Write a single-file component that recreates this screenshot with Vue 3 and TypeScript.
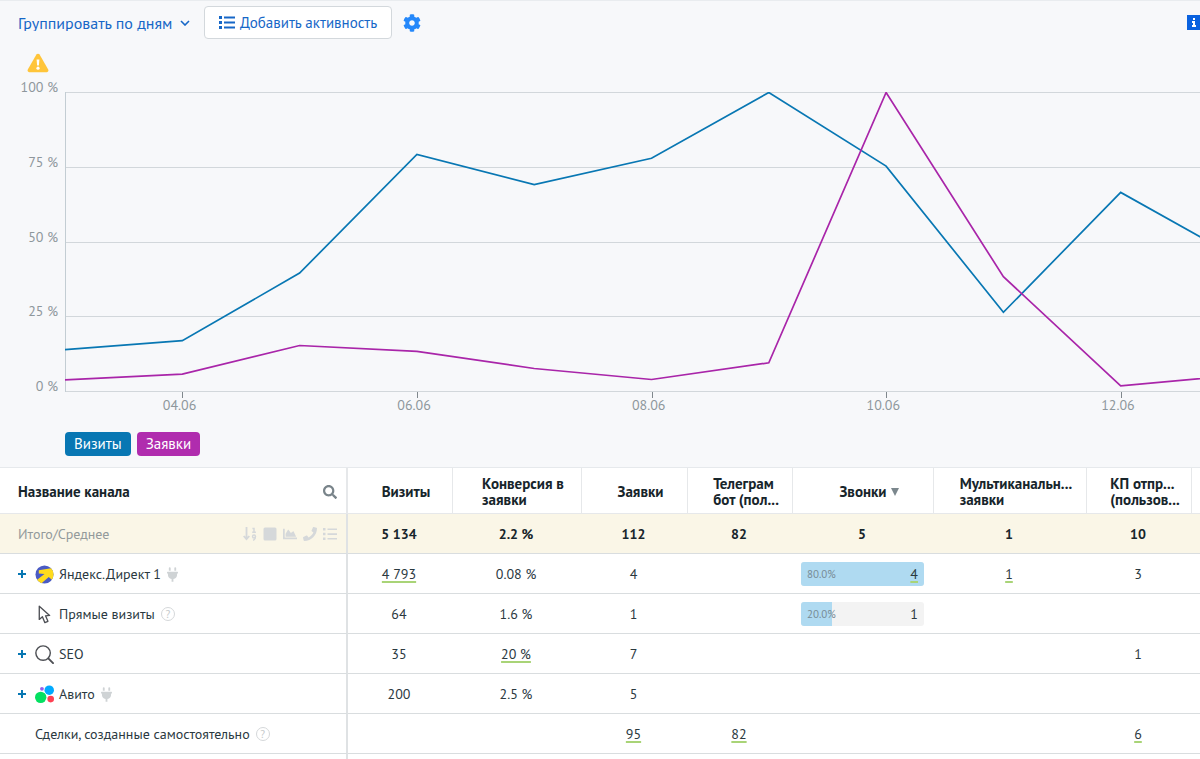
<script setup lang="ts">
import { ref } from 'vue'

interface Column {
  key: string
  title: string
  sorted?: boolean
}

interface Cell {
  text: string
  link?: boolean
  share?: string
  fill?: number
}

interface Channel {
  name: string
  icon?: 'direct' | 'cursor' | 'search' | 'avito'
  expandable?: boolean
  plug?: boolean
  help?: boolean
  cells: Record<string, Cell>
}

const grouping = ref('day')

const columns: Column[] = [
  { key: 'visits', title: 'Визиты' },
  { key: 'conversion', title: 'Конверсия в\nзаявки' },
  { key: 'leads', title: 'Заявки' },
  { key: 'telegram', title: 'Телеграм\nбот (пол...' },
  { key: 'calls', title: 'Звонки', sorted: true },
  { key: 'multi', title: 'Мультиканальн...\nзаявки' },
  { key: 'offers', title: 'КП отпр...\n(пользов...' },
]

const totals: Record<string, string> = {
  visits: '5 134',
  conversion: '2.2 %',
  leads: '112',
  telegram: '82',
  calls: '5',
  multi: '1',
  offers: '10',
}

const channels: Channel[] = [
  {
    name: 'Яндекс.Директ 1',
    icon: 'direct',
    expandable: true,
    plug: true,
    cells: {
      visits: { text: '4 793', link: true },
      conversion: { text: '0.08 %' },
      leads: { text: '4' },
      calls: { text: '4', link: true, share: '80.0%', fill: 100 },
      multi: { text: '1', link: true },
      offers: { text: '3' },
    },
  },
  {
    name: 'Прямые визиты',
    icon: 'cursor',
    help: true,
    cells: {
      visits: { text: '64' },
      conversion: { text: '1.6 %' },
      leads: { text: '1' },
      calls: { text: '1', share: '20.0%', fill: 25 },
    },
  },
  {
    name: 'SEO',
    icon: 'search',
    expandable: true,
    cells: {
      visits: { text: '35' },
      conversion: { text: '20 %', link: true },
      leads: { text: '7' },
      offers: { text: '1' },
    },
  },
  {
    name: 'Авито',
    icon: 'avito',
    expandable: true,
    plug: true,
    cells: {
      visits: { text: '200' },
      conversion: { text: '2.5 %' },
      leads: { text: '5' },
    },
  },
  {
    name: 'Сделки, созданные самостоятельно',
    help: true,
    cells: {
      leads: { text: '95', link: true },
      telegram: { text: '82', link: true },
      offers: { text: '6', link: true },
    },
  },
]

const plotWidth = 1135
const plotHeight = 300
const dayStep = 117.3
const yLabels = ['100 %', '75 %', '50 %', '25 %', '0 %']
const xTicks = [
  { label: '04.06', day: 1 },
  { label: '06.06', day: 3 },
  { label: '08.06', day: 5 },
  { label: '10.06', day: 7 },
  { label: '12.06', day: 9 },
]
const visits = [14, 17, 39.6, 79.3, 69.2, 78, 100, 75.4, 26.5, 66.6, 44.6]
const leads = [3.9, 5.8, 15.4, 13.4, 7.7, 4, 9.6, 100, 38.4, 1.9, 5.5]

const yOf = (percent: number): number => 0.5 + (100 - percent) * 2.99
const toPoints = (series: number[]): string =>
  series.map((value, day) => `${(day * dayStep).toFixed(1)},${yOf(value).toFixed(1)}`).join(' ')
const tickLeft = (day: number): string => `${((day * dayStep) / plotWidth) * 100}%`
</script>

<template>
  <main class="page">
    <section class="report">
      <div class="toolbar">
        <div class="grouping">
          <select v-model="grouping" class="grouping-select" aria-label="Группировать">
            <option value="day">Группировать по дням</option>
          </select>
          <svg class="chevron" viewBox="0 0 10 6" aria-hidden="true">
            <path d="M1 1l4 4 4-4" fill="none" stroke="currentColor" stroke-width="1.6" />
          </svg>
        </div>
        <button type="button" class="add">
          <svg class="add-icon" viewBox="0 0 16 13" aria-hidden="true">
            <path
              d="M0 0h3v3H0zM0 5h3v3H0zM0 10h3v3H0zM5 .5h11v2H5zM5 5.5h11v2H5zM5 10.5h11v2H5z"
              fill="currentColor"
            />
          </svg>
          <span>Добавить активность</span>
        </button>
        <button type="button" class="gear" aria-label="Настройки">
          <svg viewBox="0 0 512 512" aria-hidden="true">
            <path
              fill="currentColor"
              d="M487.4 315.7l-42.6-24.6c4.3-23.2 4.3-47 0-70.2l42.6-24.6c4.9-2.8 7.1-8.6 5.5-14-11.1-35.6-30-67.8-54.7-94.6-3.8-4.1-10-5.1-14.8-2.3L380.8 110c-17.9-15.4-38.5-27.3-60.8-35.1V25.8c0-5.6-3.9-10.5-9.4-11.7-36.7-8.2-74.3-7.8-109.2 0-5.5 1.2-9.4 6.1-9.4 11.7V75c-22.2 7.9-42.8 19.8-60.8 35.1L88.7 85.5c-4.9-2.8-11-1.9-14.8 2.3-24.7 26.7-43.6 58.9-54.7 94.6-1.7 5.4.6 11.2 5.5 14L67.3 221c-4.3 23.2-4.3 47 0 70.2l-42.6 24.6c-4.9 2.8-7.1 8.6-5.5 14 11.1 35.6 30 67.8 54.7 94.6 3.8 4.1 10 5.1 14.8 2.3l42.6-24.6c17.9 15.4 38.5 27.3 60.8 35.1v49.2c0 5.6 3.9 10.5 9.4 11.7 36.7 8.2 74.3 7.8 109.2 0 5.5-1.2 9.4-6.1 9.4-11.7v-49.2c22.2-7.9 42.8-19.8 60.8-35.1l42.6 24.6c4.9 2.8 11 1.9 14.8-2.3 24.7-26.7 43.6-58.9 54.7-94.6 1.5-5.5-.7-11.3-5.6-14.1zM256 336c-44.1 0-80-35.9-80-80s35.9-80 80-80 80 35.9 80 80-35.9 80-80 80z"
            />
          </svg>
        </button>
        <button type="button" class="info" aria-label="Информация">
          <svg viewBox="0 0 13 15" aria-hidden="true">
            <rect width="13" height="15" fill="#0a62df" />
            <path d="M6 3h2v2H6zM5 6h3v4h1v2H5v-2h1V8H5z" fill="#fff" />
          </svg>
        </button>
      </div>

      <svg class="warning" viewBox="0 0 22 20" role="img" aria-label="Предупреждение">
        <path
          d="M9.4 1.6a1.9 1.9 0 0 1 3.2 0l8.6 14.8a1.9 1.9 0 0 1-1.6 2.8H2.4a1.9 1.9 0 0 1-1.6-2.8z"
          fill="#ffc53a"
        />
        <path d="M9.6 6.5h2.8l-.5 6h-1.8z" fill="#fff" />
        <circle cx="11" cy="15.2" r="1.6" fill="#fff" />
      </svg>

      <div class="chart">
        <div class="y-axis">
          <span v-for="label in yLabels" :key="label">{{ label }}</span>
        </div>
        <div class="plot">
          <svg
            class="lines"
            :viewBox="`0 0 ${plotWidth} ${plotHeight}`"
            preserveAspectRatio="none"
            role="img"
            aria-label="Визиты и заявки"
          >
            <line
              v-for="step in 5"
              :key="step"
              x1="0"
              :x2="plotWidth"
              :y1="Math.round((step - 1) * 74.75) + 0.5"
              :y2="Math.round((step - 1) * 74.75) + 0.5"
              stroke="#d2d7db"
            />
            <line x1="0.5" x2="0.5" y1="0" y2="300" stroke="#c3cdd3" />
            <polyline :points="toPoints(visits)" fill="none" stroke="#0877b3" stroke-width="1.7" />
            <polyline :points="toPoints(leads)" fill="none" stroke="#a925a9" stroke-width="1.7" />
          </svg>
          <div class="x-axis">
            <div
              v-for="tick in xTicks"
              :key="tick.label"
              class="tick"
              :style="{ left: tickLeft(tick.day) }"
            >
              <span class="tick-label">{{ tick.label }}</span>
            </div>
          </div>
        </div>
      </div>

      <div class="legend">
        <button type="button" class="tag tag-visits">Визиты</button>
        <button type="button" class="tag tag-leads">Заявки</button>
      </div>
    </section>

    <table class="channels">
      <colgroup>
        <col class="c-name" />
        <col v-for="column in columns" :key="column.key" :class="`c-${column.key}`" />
        <col />
      </colgroup>
      <thead>
        <tr class="head">
          <th class="name" scope="col">
            <div class="name-line">
              <span>Название канала</span>
              <button type="button" class="search push" aria-label="Поиск">
                <svg viewBox="0 0 512 512" aria-hidden="true">
                  <path
                    fill="currentColor"
                    d="M505 442.7L405.3 343c-4.5-4.5-10.6-7-17-7H372c27.6-35.3 44-79.7 44-128C416 93.1 322.9 0 208 0S0 93.1 0 208s93.1 208 208 208c48.3 0 92.7-16.4 128-44v16.3c0 6.4 2.5 12.5 7 17l99.7 99.7c9.4 9.4 24.6 9.4 33.9 0l28.3-28.3c9.4-9.4 9.4-24.6.1-34zM208 336c-70.7 0-128-57.2-128-128 0-70.7 57.2-128 128-128 70.7 0 128 57.2 128 128 0 70.7-57.2 128-128 128z"
                  />
                </svg>
              </button>
            </div>
          </th>
          <th v-for="column in columns" :key="column.key" scope="col">
            <div class="head-cell">
              <button type="button" class="head-label">{{ column.title }}</button>
              <svg v-if="column.sorted" class="sort" viewBox="0 0 8 8" aria-hidden="true">
                <path d="M0 0h8L4 8z" fill="#7b878d" />
              </svg>
            </div>
          </th>
          <td></td>
        </tr>
      </thead>
      <tbody>
        <tr class="total">
          <th class="name" scope="row">
            <div class="name-line">
              <span>Итого/Среднее</span>
              <div class="tools push">
                <button type="button" aria-label="Сортировка">
                  <svg viewBox="0 0 14 14" aria-hidden="true">
                    <path d="M3.5 0v12M.7 9l2.8 3.2L6.3 9" fill="none" stroke="currentColor" stroke-width="1.8" />
                    <path d="M9.4 1.6h1.6V5M9.2 5.3h3.7" fill="none" stroke="currentColor" stroke-width="1.5" />
                    <circle cx="11" cy="9.5" r="1.5" fill="none" stroke="currentColor" stroke-width="1.4" />
                    <path d="M12.5 9.5c0 2-.7 3.3-2.5 3.7" fill="none" stroke="currentColor" stroke-width="1.4" />
                  </svg>
                </button>
                <button type="button" aria-label="Цвет">
                  <svg viewBox="0 0 14 14" aria-hidden="true">
                    <rect x="0.5" y="0.5" width="13" height="13" rx="1.5" fill="currentColor" />
                  </svg>
                </button>
                <button type="button" aria-label="График">
                  <svg viewBox="0 0 512 512" aria-hidden="true">
                    <path
                      fill="currentColor"
                      d="M500 384c6.6 0 12 5.4 12 12v40c0 6.6-5.4 12-12 12H12c-6.6 0-12-5.4-12-12V76c0-6.6 5.4-12 12-12h40c6.6 0 12 5.4 12 12v308h436zM372.7 159.5L288 216l-85.3-113.7c-5.1-6.8-15.5-6.3-19.9 1L96 248v104h384l-89.9-187.8c-3.2-6.5-11.4-8.7-17.4-4.7z"
                    />
                  </svg>
                </button>
                <button type="button" aria-label="Звонки">
                  <svg viewBox="0 0 512 512" aria-hidden="true">
                    <path
                      fill="currentColor"
                      d="M493.4 24.6l-104-24c-11.3-2.6-22.9 3.3-27.5 13.9l-48 112c-4.2 9.8-1.4 21.3 6.9 28l60.6 49.6c-36 76.7-98.9 140.5-177.2 177.2l-49.6-60.6c-6.8-8.3-18.2-11.1-28-6.9l-112 48C3.9 366.5-2 378.1.6 389.4l24 104C27.1 504.2 36.7 512 48 512c256.1 0 464-207.5 464-464 0-11.2-7.7-20.9-18.6-23.4z"
                    />
                  </svg>
                </button>
                <button type="button" aria-label="Список">
                  <svg viewBox="0 0 14 14" aria-hidden="true">
                    <path
                      d="M0 1h2.5v2.5H0zM0 5.8h2.5v2.5H0zM0 10.5h2.5V13H0zM4.5 1.4H14v1.7H4.5zM4.5 6.2H14v1.7H4.5zM4.5 10.9H14v1.7H4.5z"
                      fill="currentColor"
                    />
                  </svg>
                </button>
              </div>
            </div>
          </th>
          <td v-for="column in columns" :key="column.key">{{ totals[column.key] }}</td>
          <td></td>
        </tr>
        <tr v-for="channel in channels" :key="channel.name">
          <th class="name" scope="row">
            <div class="name-line">
              <span class="expand-slot">
                <button v-if="channel.expandable" type="button" class="expand" :aria-label="`Раскрыть ${channel.name}`">
                  <svg viewBox="0 0 8 8" aria-hidden="true">
                    <path d="M4 0v8M0 4h8" stroke="currentColor" stroke-width="2" />
                  </svg>
                </button>
              </span>
              <span v-if="channel.icon" class="logo">
                <svg v-if="channel.icon === 'direct'" viewBox="0 0 20 20" aria-hidden="true">
                  <clipPath id="direct-disc"><circle cx="10" cy="10" r="9.5" /></clipPath>
                  <g clip-path="url(#direct-disc)">
                    <rect width="20" height="20" fill="#4a5bc4" />
                    <path d="M4 5.5L20 3v14.5l-5.5-5L6 20l-4.500-4L10 9.500 4 9z" fill="#fedb1d" />
                  </g>
                </svg>
                <svg v-else-if="channel.icon === 'cursor'" viewBox="0 0 20 20" aria-hidden="true">
                  <path
                    d="M4.5 1.2v14l3.3-2.8 2.6 6.2 3.2-1.4-2.5-5.8 4.3-.4z"
                    fill="#fff"
                    stroke="#4d4f54"
                    stroke-width="1.4"
                    stroke-linejoin="round"
                  />
                </svg>
                <svg v-else-if="channel.icon === 'search'" viewBox="0 0 20 20" aria-hidden="true">
                  <circle cx="8.5" cy="8.5" r="7.6" fill="none" stroke="#4d4f54" stroke-width="1.5" />
                  <path d="M14 14l5 5" stroke="#4d4f54" stroke-width="2" stroke-linecap="round" />
                </svg>
                <svg v-else viewBox="0 0 20 20" aria-hidden="true">
                  <circle cx="6" cy="13" r="6" fill="#04e061" />
                  <circle cx="15" cy="5.5" r="5" fill="#00aaff" />
                  <circle cx="16.5" cy="14.8" r="3.5" fill="#ff4053" />
                  <circle cx="7.3" cy="4" r="2" fill="#965eeb" />
                </svg>
              </span>
              <span>{{ channel.name }}</span>
              <svg v-if="channel.plug" class="plug" viewBox="0 0 384 512" aria-hidden="true">
                <path
                  fill="currentColor"
                  d="M320,32a32,32,0,0,0-64,0v96h64Zm48,128H16A16,16,0,0,0,0,176v32a16,16,0,0,0,16,16H32v32A160.07,160.07,0,0,0,160,412.8V512h64V412.8A160.07,160.07,0,0,0,352,256V224h16a16,16,0,0,0,16-16V176A16,16,0,0,0,368,160ZM128,32a32,32,0,0,0-64,0v96h64Z"
                />
              </svg>
              <button v-if="channel.help" type="button" class="help" :aria-label="`Справка: ${channel.name}`">?</button>
            </div>
          </th>
          <td v-for="column in columns" :key="column.key" :class="{ 'bar-cell': column.key === 'calls' }">
            <template v-if="channel.cells[column.key]">
              <div v-if="channel.cells[column.key].share" class="bar">
                <div class="bar-fill" :style="{ width: `${channel.cells[column.key].fill}%` }"></div>
                <span class="bar-share">{{ channel.cells[column.key].share }}</span>
                <a v-if="channel.cells[column.key].link" href="#" class="link bar-value">{{ channel.cells[column.key].text }}</a>
                <span v-else class="bar-value">{{ channel.cells[column.key].text }}</span>
              </div>
              <a v-else-if="channel.cells[column.key].link" href="#" class="link">{{ channel.cells[column.key].text }}</a>
              <template v-else>{{ channel.cells[column.key].text }}</template>
            </template>
          </td>
          <td></td>
        </tr>
      </tbody>
      <tfoot>
        <tr class="rest">
          <td class="name"></td>
          <td colspan="8"></td>
        </tr>
      </tfoot>
    </table>
  </main>
</template>

<style>
body {
  margin: 0;
  background: #fff;
}
</style>

<style scoped>
.page {
  height: 100vh;
  overflow: hidden;
  font-family: 'PT Sans', 'Noto Sans', sans-serif;
  font-size: 14px;
  line-height: 16px;
  color: #2b393f;
}
button,
select {
  margin: 0;
  padding: 0;
  border: 0;
  background: none;
  color: inherit;
  font: inherit;
  cursor: pointer;
}
svg {
  display: block;
}
a {
  color: inherit;
}

.report {
  border-top: 1px solid #e9ecef;
  border-bottom: 1px solid #e6e9ec;
  background: #f7f8fa;
}
.toolbar {
  display: flex;
  align-items: center;
  padding: 5px 0 0 18px;
  color: #1667c7;
  font-size: 16px;
}
.grouping {
  display: flex;
  align-items: center;
  gap: 7px;
}
.grouping-select {
  appearance: none;
}
.chevron {
  width: 10px;
  height: 6px;
}
.add {
  display: flex;
  align-items: center;
  gap: 5px;
  height: 33px;
  margin-left: 14px;
  padding: 0 14px;
  border: 1px solid #d3d8dc;
  border-radius: 4px;
  background: #fff;
  font-size: 15px;
}
.add-icon {
  width: 16px;
  height: 13px;
}
.gear {
  margin-left: 11px;
  color: #2588fa;
}
.gear svg {
  width: 18px;
  height: 18px;
}
.info {
  margin-left: auto;
}
.info svg {
  width: 13px;
  height: 15px;
}
.warning {
  width: 22px;
  height: 20px;
  margin: 14px 0 0 27px;
}

.chart {
  display: flex;
  gap: 7px;
  margin-top: 5px;
  color: #8e979c;
}
.y-axis {
  display: flex;
  flex-direction: column;
  justify-content: space-between;
  width: 58px;
  height: 318px;
  line-height: 19px;
  text-align: right;
}
.plot {
  flex: 1;
  padding-top: 14px;
}
.lines {
  width: 100%;
  height: 300px;
}
.x-axis {
  position: relative;
  height: 24px;
}
.tick {
  position: absolute;
  top: 0;
  width: 1px;
  height: 6px;
  background: #7f878c;
}
.tick-label {
  position: absolute;
  top: 5px;
  right: -13px;
}

.legend {
  display: flex;
  gap: 6px;
  padding: 16px 0 11px 65px;
}
.tag {
  height: 24px;
  padding: 0 9px;
  border-radius: 4px;
  color: #fff;
  font-size: 15px;
}
.tag-visits {
  background: #0877b3;
}
.tag-leads {
  background: #b02cae;
}

.channels {
  width: 100%;
  border-collapse: separate;
  border-spacing: 0;
  table-layout: fixed;
}
.c-name {
  width: 348px;
}
.c-visits,
.c-telegram,
.c-offers {
  width: 105px;
}
.c-conversion {
  width: 129px;
}
.c-leads {
  width: 106px;
}
.c-calls {
  width: 141px;
}
.c-multi {
  width: 153px;
}
th,
td {
  box-sizing: border-box;
  height: 40px;
  padding: 1px 0 0;
  border-bottom: 1px solid #d9dddf;
  text-align: center;
  font-weight: 400;
}
td {
  padding-right: 3px;
}
.name {
  border-right: 2px solid #dfe2e4;
}
.name-line {
  display: flex;
  align-items: center;
  padding: 0 9px 0 18px;
  white-space: nowrap;
}
.push {
  margin-left: auto;
}

.head th,
.head td {
  height: 46px;
  padding-top: 2px;
  border-color: #e6e8ea;
  color: #17252b;
  font-size: 15px;
  font-weight: 700;
}
.head th:not(.name) {
  border-right: 1px solid #e6e8ea;
}
.head-cell {
  display: flex;
  align-items: center;
  justify-content: center;
  gap: 4px;
  padding-left: 12px;
}
.head-label {
  text-align: left;
  white-space: pre;
}
.sort {
  width: 8px;
  height: 8px;
}
.search {
  color: #79848a;
}
.search svg {
  width: 14px;
  height: 14px;
}

.total th,
.total td {
  background: #faf6e7;
}
.total td {
  color: #17252b;
  font-weight: 700;
}
.total .name {
  color: #939a9b;
}
.tools {
  display: flex;
  gap: 6px;
  color: #d5d8da;
}
.tools svg {
  width: 14px;
  height: 14px;
}

.expand-slot {
  display: flex;
  width: 17px;
}
.expand {
  color: #0877b3;
}
.expand svg {
  width: 8px;
  height: 8px;
}
.logo {
  display: flex;
  margin-right: 5px;
}
.logo svg {
  width: 19px;
  height: 19px;
}
.plug {
  width: 11px;
  height: 15px;
  margin-left: 6px;
  color: #cfd3d5;
}
.help {
  box-sizing: border-box;
  width: 14px;
  height: 14px;
  margin-left: 6px;
  border: 1px solid #d5d8da;
  border-radius: 50%;
  color: #c6cacc;
  font-size: 11px;
  line-height: 12px;
}
.link {
  text-decoration: underline 2px #a9d477;
  text-decoration-skip-ink: none;
  text-underline-offset: 2px;
}
.bar-cell {
  padding: 0;
}
.bar {
  position: relative;
  display: flex;
  align-items: center;
  justify-content: space-between;
  height: 24px;
  margin: 0 10px 0 8px;
  padding: 0 6px;
  border-radius: 3px;
  overflow: hidden;
  background: #f3f3f3;
}
.bar-fill {
  position: absolute;
  inset: 0 auto 0 0;
  background: #afdaf1;
}
.bar-share,
.bar-value {
  position: relative;
}
.bar-share {
  color: #778b96;
  font-size: 11px;
}
.total .bar-cell {
  padding: 1px 3px 0 0;
}
.rest td {
  border-bottom: 0;
}
</style>
